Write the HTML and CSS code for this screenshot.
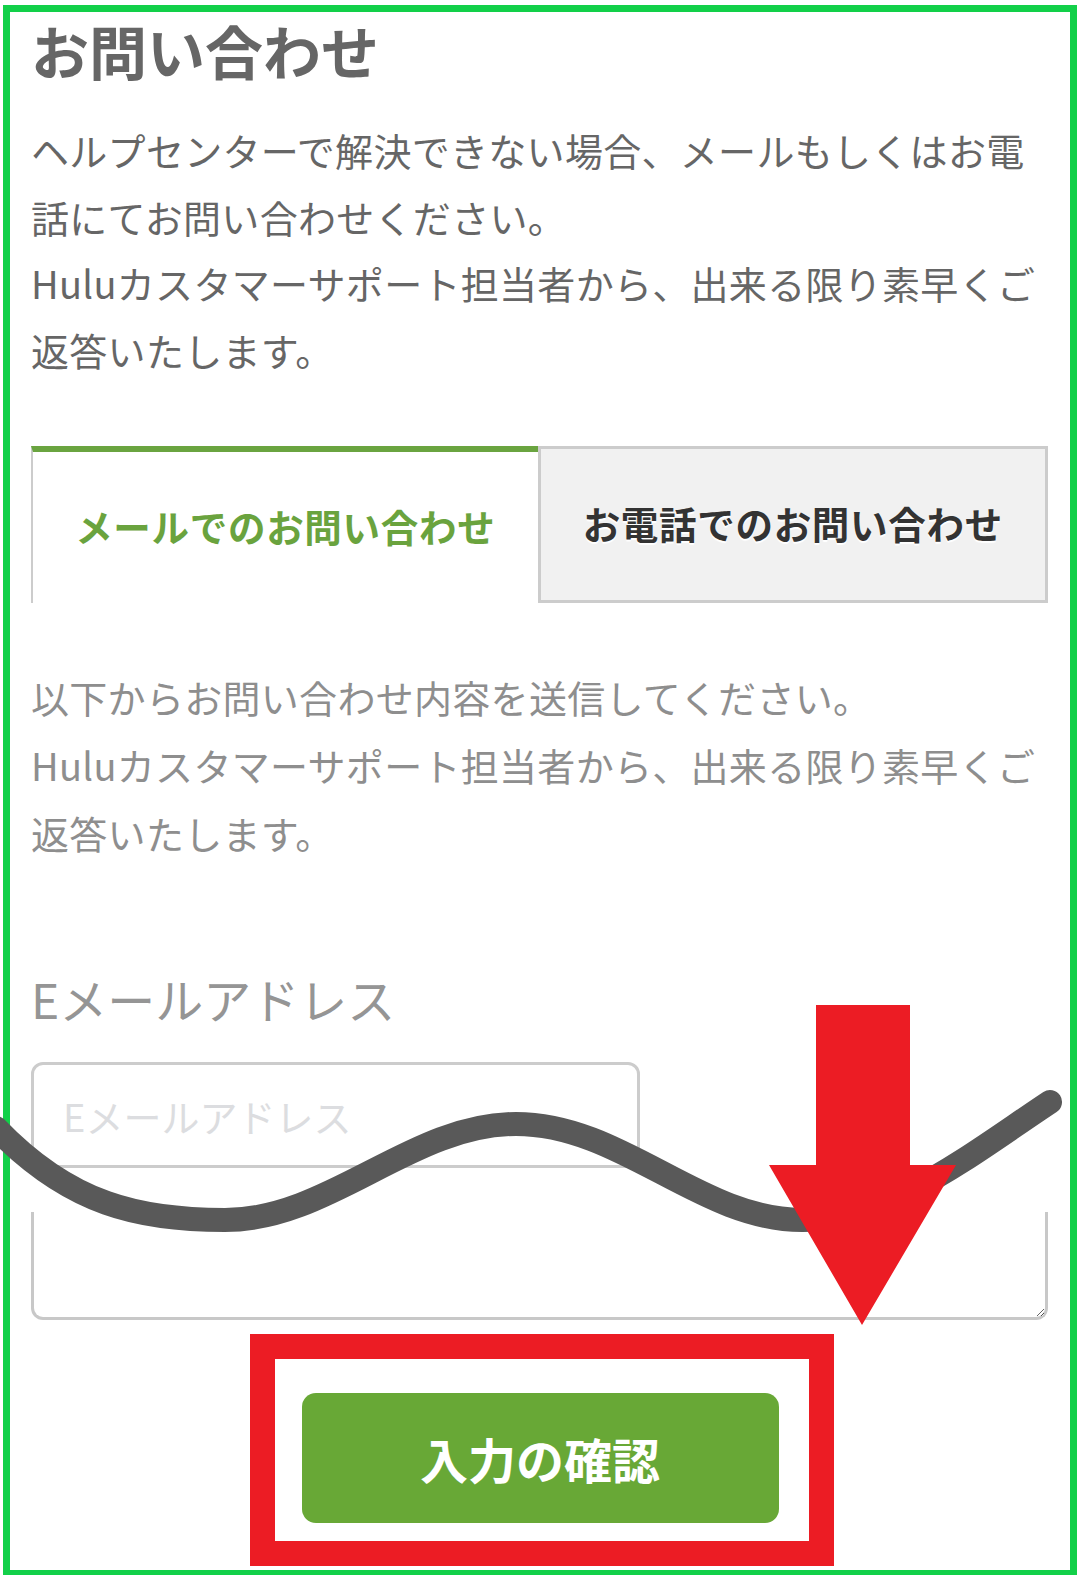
FILE: index.html
```html
<!DOCTYPE html>
<html lang="ja">
<head>
<meta charset="utf-8">
<title>お問い合わせ</title>
<link rel="stylesheet" href="styles.css">
</head>
<body>
<div class="page">
  <h1 class="title">お問い合わせ</h1>
  <p class="intro">ヘルプセンターで解決できない場合、メールもしくはお電話にてお問い合わせください。<br>Huluカスタマーサポート担当者から、出来る限り素早くご返答いたします。</p>
  <div class="tabs">
    <div class="tab tab-active">メールでのお問い合わせ</div>
    <div class="tab tab-idle">お電話でのお問い合わせ</div>
  </div>
  <p class="lead">以下からお問い合わせ内容を送信してください。<br>Huluカスタマーサポート担当者から、出来る限り素早くご返答いたします。</p>
  <label class="field-label" for="email">Eメールアドレス</label>
  <input class="field-input" id="email" type="text" placeholder="Eメールアドレス">
  <textarea class="field-area"></textarea>
  <div class="actions">
    <button class="submit" type="button">入力の確認</button>
  </div>
</div>
<div class="mark-box"></div>
<svg class="overlay" width="1080" height="1575" viewBox="0 0 1080 1575" xmlns="http://www.w3.org/2000/svg">
  <path class="wave" d="M -4 1128 C 70 1205, 140 1220, 225 1220 C 330 1220, 411 1124, 516 1124 C 622 1124, 700 1220, 802 1220 C 890 1220, 970 1155, 1050 1102"/>
  <polygon class="arrow" points="816,1005 910,1005 910,1165 956,1165 862,1325 769,1165 816,1165"/>
</svg>
</body>
</html>
```
FILE: styles.css
```css
html, body {
  margin: 0;
  padding: 0;
  background: #ffffff;
}
body {
  position: relative;
  width: 1080px;
  height: 1575px;
  overflow: hidden;
  font-family: "Noto Sans CJK JP", "Noto Sans", sans-serif;
}
.page {
  box-sizing: border-box;
  width: 1074px;
  height: 1572px;
  margin: 5px 0 0 3px;
  border: 7px solid #12d049;
  padding: 0 22px 0 21px;
  display: flex;
  flex-direction: column;
}
.title {
  margin: 3px 0 0;
  font-size: 58px;
  line-height: 70px;
  font-weight: 700;
  color: #666666;
}
.intro {
  margin: 32px 0 0;
  font-size: 38px;
  line-height: 66.5px;
  letter-spacing: 0.3px;
  color: #666666;
}
.tabs {
  margin-top: 63px;
  display: flex;
  height: 157px;
}
.tab {
  box-sizing: border-box;
  flex: 1 1 0;
  display: flex;
  align-items: center;
  justify-content: center;
  font-size: 37.5px;
  letter-spacing: 0.7px;
  font-weight: 700;
}
.tab-active {
  border-top: 6px solid #6aa440;
  border-left: 2px solid #cccccc;
  color: #6aa33e;
  padding-bottom: 4px;
}
.tab-idle {
  border: 3px solid #cccccc;
  background: #f1f1f1;
  color: #333333;
  text-shadow: 0 2px 1px #ffffff;
  padding-bottom: 4px;
}
.lead {
  margin: 60px 0 0;
  font-size: 38px;
  line-height: 68px;
  letter-spacing: 0.3px;
  color: #8e8e8e;
}
.field-label {
  display: block;
  margin-top: 101px;
  font-size: 48px;
  line-height: 60px;
  color: #959595;
}
.field-input {
  box-sizing: border-box;
  display: block;
  margin-top: 34px;
  width: 609px;
  height: 106px;
  border: 3px solid #cccccc;
  border-radius: 12px;
  padding: 0 0 0 29px;
  font-family: "Noto Sans CJK JP", sans-serif;
  font-size: 38px;
  color: #555555;
  background: #ffffff;
  outline: none;
}
.field-input::placeholder {
  color: #dcdde0;
}
.field-area {
  box-sizing: border-box;
  display: block;
  margin-top: 44px;
  width: 100%;
  height: 108px;
  border: 3px solid #c8c8c8;
  border-top: 0;
  border-radius: 0 0 12px 12px;
  background: #ffffff;
  resize: vertical;
  outline: none;
}
.actions {
  margin-top: 73px;
  display: flex;
  justify-content: center;
}
.submit {
  width: 477px;
  height: 130px;
  border: 0;
  border-radius: 14px;
  background: #68a836;
  color: #ffffff;
  font-family: "Noto Sans CJK JP", sans-serif;
  font-size: 48px;
  font-weight: 700;
  margin-left: 1px;
}
.mark-box {
  position: absolute;
  left: 250px;
  top: 1334px;
  width: 584px;
  height: 232px;
  box-sizing: border-box;
  border: 25px solid #ec1c24;
}
.overlay {
  position: absolute;
  left: 0;
  top: 0;
}
.wave {
  fill: none;
  stroke: #595959;
  stroke-width: 24;
  stroke-linecap: round;
}
.arrow {
  fill: #ec1c24;
}
```
